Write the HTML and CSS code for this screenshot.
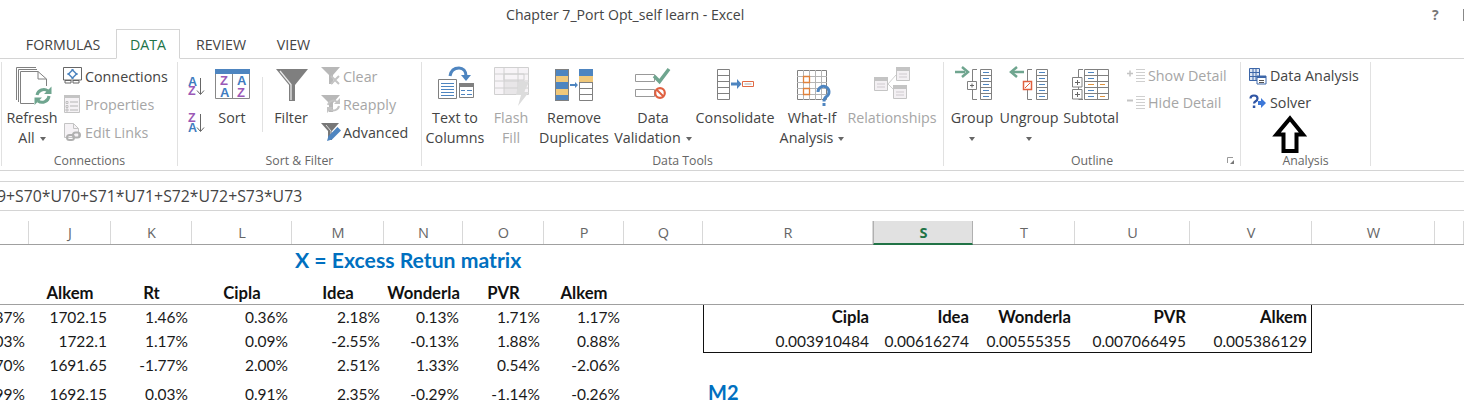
FILE: index.html
```html
<!DOCTYPE html>
<html lang="en">
<head>
<meta charset="utf-8">
<title>Chapter 7_Port Opt_self learn - Excel</title>
<link rel="stylesheet" href="styles.css">
</head>
<body>
<div class="page">
  <header class="titlebar">
    <span class="title">Chapter 7_Port Opt_self learn - Excel</span>
    <span class="help">?</span>
    <span class="winline"></span>
  </header>
  <nav class="tabs">
    <span class="tab">FORMULAS</span>
    <span class="tab active">DATA</span>
    <span class="tab">REVIEW</span>
    <span class="tab">VIEW</span>
  </nav>
  <section class="ribbon">
    <div class="group g1">
      <div class="body">
        <div class="big w-refresh">
          <svg class="bigicon" width="56" height="46" viewBox="4 62 56 46"><g fill="none" stroke="#808080"><path d="M16.5 100V67.5H36"/><path d="M18.5 102V69.5H37"/><path d="M20.5 103.5V71.5H38L46.5 79V86"/><path d="M20.5 103.5H34M38 71.5V79H46.5"/></g><g fill="none" stroke="#6fa58f" stroke-width="3"><path d="M37 95a7 7 0 0 1 11-4"/><path d="M49 96a7 7 0 0 1-11 5"/></g><path d="M51.500 86.500v7.500h-7.500zM34.500 105v-7.500h7.500z" fill="#6fa58f"/></svg>
          <span class="lbl">Refresh</span>
          <span class="lbl">All<i class="caret"></i></span>
        </div>
        <div class="small-col ml2">
          <div class="small"><svg width="21" height="20" viewBox="62 66 21 20"><path d="M63.500 67.500h18v12.500h-18z" fill="#fff" stroke="#666"/><path d="M65 80.500h6v2.500h-6zM73 80.500h6v2.500h-6z" fill="#fff" stroke="#666"/><path d="M72.500 70l4 4-4 4-4-4z" fill="#fff" stroke="#4e85c0" stroke-width="1.500"/><path d="M71.500 69h2v2h-2zM71.500 77h2v2h-2zM67.500 73h2v2h-2zM75.500 73h2v2h-2z" fill="#4e85c0"/></svg><span>Connections</span></div>
          <div class="small off"><svg width="21" height="20" viewBox="62 94 21 20"><path d="M64.500 95.500h15v17h-15z" fill="#f5f2f5" stroke="#c4c4c4"/><path d="M64 95h16v3H64z" fill="#c4c4c4"/><path d="M70 102h8M70 106h8M70 110h8" stroke="#b5b5b5"/><path d="M66 101.500h2v2h-2zM66 105.500h2v2h-2zM66 109h2v2h-2z" fill="none" stroke="#b5b5b5" stroke-width=".8"/></svg><span>Properties</span></div>
          <div class="small off"><svg width="21" height="20" viewBox="62 122 21 20"><path d="M64.500 123.500h9l5 5v9h-14z" fill="#f5f2f5" stroke="#c4c4c4"/><path d="M73.500 123.500v5h5" fill="none" stroke="#c4c4c4"/><g fill="none" stroke="#b0b0b0" stroke-width="2"><rect x="67" y="135" width="7" height="5" rx="2.500"/><rect x="73" y="132.500" width="7" height="5" rx="2.500"/></g></svg><span>Edit Links</span></div>
        </div>
      </div>
      <div class="group-label">Connections</div>
    </div>

    <div class="group g2">
      <div class="body">
        <div class="sortcol">
          <svg width="20" height="36" viewBox="187 68 20 36"><text class="ico-l blue" x="188" y="86">A</text><text class="ico-l purple" x="188" y="95">Z</text><path d="M200.500 78v16M197 90.500l3.500 4 3.500-4" fill="none" stroke="#666"/></svg>
          <svg width="20" height="36" viewBox="187 104 20 36"><text class="ico-l purple" x="188" y="122">Z</text><text class="ico-l blue" x="188" y="132">A</text><path d="M200.500 114v17M197 127.500l3.500 4 3.500-4" fill="none" stroke="#666"/></svg>
        </div>
        <div class="big w-sort">
          <svg class="bigicon" width="50" height="46" viewBox="207 62 50 46"><path d="M215.500 69.500h34v29h-34z" fill="#fff" stroke="#888"/><path d="M215 69h35v5h-35z" fill="#4e85c0"/><path d="M232.500 74v25" stroke="#888"/><text class="ico-m purple" x="220" y="85">Z</text><text class="ico-m blue" x="220" y="97">A</text><text class="ico-m blue" x="237" y="85">A</text><text class="ico-m purple" x="237" y="97">Z</text></svg>
          <span class="lbl">Sort</span>
        </div>
        <div class="vsep"></div>
        <div class="big w-filter">
          <svg class="bigicon" width="56" height="46" viewBox="263 62 56 46"><path d="M276 69h32l-13 16v16h-6V85z" fill="#7f7f7f"/><path d="M280 71l11 13.500V100" fill="none" stroke="#e8e8e8" stroke-width="1.300"/></svg>
          <span class="lbl">Filter</span>
        </div>
        <div class="small-col ml2">
          <div class="small off"><svg width="20" height="20" viewBox="321 66 20 20"><path d="M321 67h19l-7 8v9h-4v-9z" fill="#b8b8b8"/><path d="M331 76l8 8M339 76l-8 8" stroke="#c4c4c4" stroke-width="2"/></svg><span>Clear</span></div>
          <div class="small off"><svg width="20" height="20" viewBox="321 94 20 20"><path d="M321 95h19l-7 8v9h-4v-9z" fill="#b8b8b8"/><g fill="none" stroke="#c4c4c4" stroke-width="2"><path d="M328 105a5.500 5.500 0 0 1 9-3"/><path d="M339 106a5.500 5.500 0 0 1-9 3"/></g><path d="M340 98v6h-6zM327 113v-6h6z" fill="#c4c4c4"/></svg><span>Reapply</span></div>
          <div class="small"><svg width="20" height="20" viewBox="321 122 20 20"><path d="M321 123h18l-7 8v9h-4v-9z" fill="#777"/><path d="M326 125l5 6v8" fill="none" stroke="#ddd"/><path d="M327 141l1.500-5 9-9 3.500 3.500-9 9z" fill="#4e85c0"/></svg><span>Advanced</span></div>
        </div>
      </div>
      <div class="group-label">Sort &amp; Filter</div>
    </div>

    <div class="group g3">
      <div class="body">
        <div class="big w-text">
          <svg class="bigicon" width="58" height="46" viewBox="426 62 58 46"><path d="M438.500 79.500h18v19h-18z" fill="#fff" stroke="#808080"/><path d="M441 83.500h13M441 86.500h13M441 89.500h13M441 92.500h13M441 95.500h13" stroke="#4e85c0"/><path d="M459.500 83.500h14v14h-14z" fill="#fff" stroke="#808080"/><path d="M459 83h15v4h-15z" fill="#808080"/><path d="M461 90.500h4M467 90.500h5M461 94.500h4M467 94.500h5" stroke="#4e85c0"/><path d="M450 76c1-6 5-8 9-8s7 3 7 8" fill="none" stroke="#4e85c0" stroke-width="3"/><path d="M461 75h10l-5 6z" fill="#4e85c0"/></svg>
          <span class="lbl">Text to</span><span class="lbl">Columns</span>
        </div>
        <div class="big w-flash off">
          <svg class="bigicon" width="54" height="46" viewBox="484 62 54 46"><path d="M494.500 67.500h34v27h-34z" fill="#f7f4f7" stroke="#d0d0d0"/><path d="M504 74h20v6h-20z" fill="none" stroke="#d0d0d0"/><path d="M504 81h21v13h-21z" fill="#e8e6e8"/><path d="M494 74h35M494 81h35M494 88h35M504 67v28M518 67v28" fill="none" stroke="#d0d0d0"/><path d="M519 82h10l-5 10h5l-11 14 3-11h-5z" fill="#dcdcdc"/></svg>
          <span class="lbl">Flash</span><span class="lbl">Fill</span>
        </div>
        <div class="big w-remove">
          <svg class="bigicon" width="72" height="46" viewBox="538 62 72 46"><path d="M555 69h14v32h-14z" fill="#4e85c0"/><path d="M555 76h14v6h-14zM555 89h14v6h-14z" fill="#f0c87a"/><path d="M555.500 69.500h13v31h-13z" fill="none" stroke="#808080"/><path d="M579.500 69.500h13v31h-13z" fill="#fff" stroke="#808080"/><path d="M579 69h14v7h-14z" fill="#4e85c0"/><path d="M579 76h14v6h-14z" fill="#f0c87a"/><path d="M579 82.500h14M579 88.500h14M579 94.500h14" stroke="#808080"/><path d="M570 84h5v-2l3 3-3 3v-2h-5z" fill="#4e85c0"/></svg>
          <span class="lbl">Remove</span><span class="lbl">Duplicates</span>
        </div>
        <div class="big w-valid">
          <svg class="bigicon" width="86" height="46" viewBox="610 62 86 46"><path d="M635.500 74.500h19v7h-19zM635.500 89.500h19v7h-19z" fill="#fff" stroke="#999"/><path d="M654 76l5.500 5.500L669 69" fill="none" stroke="#6fa58f" stroke-width="3.500"/><circle cx="660" cy="93" r="4.800" fill="#fff" stroke="#e06040" stroke-width="2.200"/><path d="M656.500 89.500l7 7" stroke="#e06040" stroke-width="2"/></svg>
          <span class="lbl">Data</span>
          <span class="lbl">Validation<i class="caret"></i></span>
        </div>
        <div class="big w-cons">
          <svg class="bigicon" width="78" height="46" viewBox="696 62 78 46"><path d="M717.500 69.500h12v30h-12z" fill="#fff" stroke="#808080"/><path d="M717 75.500h13M717 81.500h13M717 87.500h13M717 93.500h13" stroke="#808080"/><path d="M731 82.500h6V79l4.500 5-4.500 5v-3.500h-6z" fill="#4e85c0"/><path d="M742.500 81.500h11v5h-11z" fill="#fff" stroke="#e06a45"/><path d="M744.500 84h7" stroke="#aaa"/></svg>
          <span class="lbl">Consolidate</span>
        </div>
        <div class="big w-what">
          <svg class="bigicon" width="76" height="46" viewBox="774 62 76 46"><path d="M797.500 70.500h29v29h-29z" fill="#fff" stroke="#808080"/><path d="M797 76.500h30M797 82.500h30M797 88.500h30M797 94.500h30M803.500 70v30M809.500 70v30M815.500 70v30M821.500 70v30" stroke="#b5b5b5"/><path d="M803.500 76.500h6v6h-6zM803.500 88.500h6v6h-6z" fill="#fff" stroke="#e0813a" stroke-width="1.300"/><path d="M818 92a5.500 5.500 0 1 1 8.500 4.500c-2 1.500-2.500 2-2.500 5" fill="none" stroke="#4e85c0" stroke-width="3"/><path d="M822.500 103h3v3h-3z" fill="#4e85c0"/></svg>
          <span class="lbl">What-If</span>
          <span class="lbl">Analysis<i class="caret"></i></span>
        </div>
        <div class="big w-rel off">
          <svg class="bigicon" width="84" height="46" viewBox="850 62 84 46"><path d="M888 84l8-9M888 84l7 7" stroke="#d0d0d0"/><g fill="#f3f0f3" stroke="#c4c4c4"><path d="M874.500 77.500h13v13h-13zM896.500 67.500h13v13h-13zM893.500 85.500h13v13h-13z"/></g><path d="M874 77h14v4h-14zM896 67h14v4h-14zM893 85h14v4h-14z" fill="#c4c4c4"/><path d="M877 84h8M877 87h8M899 74h8M899 77h8M896 92h8M896 95h8" stroke="#cfcacf"/></svg>
          <span class="lbl">Relationships</span>
        </div>
      </div>
      <div class="group-label">Data Tools</div>
    </div>

    <div class="group g4">
      <div class="body">
        <div class="big w-group">
          <svg class="bigicon" width="50" height="46" viewBox="947 62 50 46"><path d="M955 72h10" stroke="#6fa58f" stroke-width="2.500"/><path d="M962 67l6 5-6 5" fill="none" stroke="#6fa58f" stroke-width="2.500"/><path d="M977 69.500h-4.500v11.500M972.500 89v10.500h4.500" fill="none" stroke="#808080"/><path d="M967.500 81.500h9v8h-9z" fill="#fff" stroke="#808080"/><path d="M970 85.500h4M972 83.500v4" stroke="#666"/><path d="M980.500 69.500h11v30h-11z" fill="#fff" stroke="#808080"/><path d="M980 75.500h12M980 81.500h12M980 87.500h12M980 93.500h12" stroke="#808080"/><path d="M983 72.500h6M983 78.500h6M983 84.500h6M983 90.500h6M983 96.500h6" stroke="#4e85c0"/></svg>
          <span class="lbl">Group</span>
          <span class="lbl"><i class="caret solo"></i></span>
        </div>
        <div class="big w-ungroup">
          <svg class="bigicon" width="64" height="46" viewBox="997 62 64 46"><path d="M1013 72h11" stroke="#6fa58f" stroke-width="2.500"/><path d="M1017 67l-6 5 6 5" fill="none" stroke="#6fa58f" stroke-width="2.500"/><path d="M1032 69.500h-4.500v11.500M1027.500 89v10.500h4.500" fill="none" stroke="#808080"/><path d="M1023.500 81.500h8v8h-8z" fill="#fff" stroke="#e06040" stroke-width="1.500"/><path d="M1025 88l5-5" stroke="#e06040"/><path d="M1036.500 69.500h11v30h-11z" fill="#fff" stroke="#808080"/><path d="M1036 75.500h12M1036 81.500h12M1036 87.500h12M1036 93.500h12" stroke="#808080"/><path d="M1039 72.500h6M1039 78.500h6M1039 84.500h6M1039 90.500h6M1039 96.500h6" stroke="#4e85c0"/></svg>
          <span class="lbl">Ungroup</span>
          <span class="lbl"><i class="caret solo"></i></span>
        </div>
        <div class="big w-subtotal">
          <svg class="bigicon" width="60" height="46" viewBox="1061 62 60 46"><path d="M1083 69.500h-4.500V77M1078.500 87v2M1078.500 99.500h4.500" fill="none" stroke="#808080"/><path d="M1072.500 77.500h9.500v9.500h-9.500zM1072.500 89.500h9.500v9.500h-9.500z" fill="#fff" stroke="#808080"/><path d="M1075 82.500h5M1077.500 80v5M1075 94.500h5M1077.500 92v5" stroke="#666"/><path d="M1084.500 69.500h24v30h-24z" fill="#fff" stroke="#808080"/><path d="M1084 75.500h25M1084 81.500h25M1084 87.500h25M1084 93.500h25M1097.500 69v31" stroke="#808080"/><path d="M1088 72.500h6M1088 78.500h6M1088 84.500h6M1088 90.500h6M1088 96.500h6" stroke="#4e85c0"/><path d="M1100 84.500h5M1100 96.500h5M1088 84.500h6" stroke="#e0913a"/></svg>
          <span class="lbl">Subtotal</span>
        </div>
        <div class="small-col tight ml5">
          <div class="small off"><svg width="20" height="20" viewBox="1126 65 20 20"><path d="M1127 72.500h6M1130 69.500v6" stroke="#c4c4c4" stroke-width="1.500"/><path d="M1136 68.500h9M1136 71.500h9M1136 74.500h9M1136 77.500h9M1136 80.500h9" stroke="#cfcfcf"/></svg><span>Show Detail</span></div>
          <div class="small off"><svg width="20" height="20" viewBox="1126 92 20 20"><path d="M1127 99.500h6" stroke="#c4c4c4" stroke-width="2"/><path d="M1136 95.500h9M1136 98.500h9M1136 101.500h9M1136 104.500h9M1136 107.500h9" stroke="#cfcfcf"/></svg><span>Hide Detail</span></div>
        </div>
      </div>
      <div class="group-label labelled">Outline
        <svg class="launcher" width="8" height="8" viewBox="0 0 8 8"><path d="M.5 6V.5H6" fill="none" stroke="#999"/><path d="M7 3v4H3z" fill="#777"/></svg>
      </div>
    </div>

    <div class="group g5">
      <div class="body">
        <div class="small-col tight">
          <div class="small"><svg width="19" height="20" viewBox="1249 65 19 20"><path d="M1249.500 67.500h10v12h-10z" fill="#dfe7f3" stroke="#3c66a8"/><path d="M1253 67v13M1256 67v13M1249 71.500h11M1249 75.500h11" stroke="#3c66a8"/><path d="M1257 75h9v8h-9z" fill="#fff" stroke="#3c66a8"/><path d="M1257 75h9v2h-9z" fill="#3c66a8"/><path d="M1259 79.500h5M1259 81.500h5" stroke="#555"/></svg><span>Data Analysis</span></div>
          <div class="small"><svg width="19" height="20" viewBox="1249 92 19 20"><path d="M1250.500 97.500c0-4 7-4 7 0 0 3-3.500 2.500-3.500 5" fill="none" stroke="#2f55a4" stroke-width="2.200"/><path d="M1252.800 104.500h2.500v2.500h-2.500z" fill="#2f55a4"/><path d="M1258 100h3v-3l5 5-5 5v-3h-3z" fill="#3d78d8"/></svg><span>Solver</span></div>
        </div>
      </div>
      <div class="group-label">Analysis</div>
    </div>

    <svg class="annot" width="36" height="40" viewBox="1272 115 36 40"><path d="M1290 118.500l13 16h-6.500v16.500h-13v-16.500h-7z" fill="#fff" stroke="#000" stroke-width="4"/></svg>
  </section>

  <div class="formula"><span>9+S70*U70+S71*U71+S72*U72+S73*U73</span></div>

  <div class="colhead cols">
    <span></span><span>J</span><span>K</span><span>L</span><span>M</span><span>N</span><span>O</span><span>P</span><span>Q</span><span>R</span><span class="sel">S</span><span>T</span><span>U</span><span>V</span><span>W</span><span></span>
  </div>

  <div class="sheet">
    <div class="cols r-title"><span></span><span></span><span></span><span></span><span class="heading">X = Excess Retun matrix</span></div>
    <div class="cols r-head">
      <span></span><span class="c b">Alkem</span><span class="c b">Rt</span><span class="c b">Cipla</span><span class="c b">Idea</span><span class="c b">Wonderla</span><span class="c b">PVR</span><span class="c b">Alkem</span>
    </div>
    <div class="cols r1">
      <span class="n">.87%</span><span class="n">1702.15</span><span class="n">1.46%</span><span class="n">0.36%</span><span class="n">2.18%</span><span class="n">0.13%</span><span class="n">1.71%</span><span class="n">1.17%</span><span></span>
      <span class="n b boxl">Cipla</span><span class="n b">Idea</span><span class="n b">Wonderla</span><span class="n b">PVR</span><span class="n b boxr">Alkem</span>
    </div>
    <div class="cols r2">
      <span class="n">.03%</span><span class="n">1722.1</span><span class="n">1.17%</span><span class="n">0.09%</span><span class="n">-2.55%</span><span class="n">-0.13%</span><span class="n">1.88%</span><span class="n">0.88%</span><span></span>
      <span class="n boxl boxb">0.003910484</span><span class="n boxb">0.00616274</span><span class="n boxb">0.00555355</span><span class="n boxb">0.007066495</span><span class="n boxr boxb">0.005386129</span>
    </div>
    <div class="cols r3">
      <span class="n">.70%</span><span class="n">1691.65</span><span class="n">-1.77%</span><span class="n">2.00%</span><span class="n">2.51%</span><span class="n">1.33%</span><span class="n">0.54%</span><span class="n">-2.06%</span>
    </div>
    <div class="cols r4">
      <span class="n">.99%</span><span class="n">1692.15</span><span class="n">0.03%</span><span class="n">0.91%</span><span class="n">2.35%</span><span class="n">-0.29%</span><span class="n">-1.14%</span><span class="n">-0.26%</span><span></span>
      <span class="heading m2">M2</span>
    </div>
  </div>
</div>
</body>
</html>
```
FILE: styles.css
```css
* { box-sizing: border-box; }
html, body { margin: 0; padding: 0; background: #fff; }
.page { width: 1464px; height: 408px; overflow: hidden; font-family: "Open Sans", "Noto Sans", sans-serif; color: #444; }

.titlebar { height: 29px; display: flex; align-items: center; font-size: 14.100px; padding-left: 506px; }
.title { width: 926px; white-space: nowrap; color: #444; }
.help { font-weight: 700; font-size: 14px; color: #777; width: 31px; }
.winline { width: 1px; height: 12px; background: #888; }

.tabs { height: 30px; display: flex; padding-left: 10px; border-bottom: 1px solid #d4d4d4; font-size: 14.200px; }
.tab { height: 30px; display: flex; align-items: center; justify-content: center; width: 106px; color: #444; }
.tab:nth-child(3) { width: 82px; }
.tab:nth-child(4) { width: 63px; }
.tab.active { width: 64px; color: #217346; background: #fff; border: 1px solid #d4d4d4; border-bottom: 1px solid #fff; }

.ribbon { position: relative; display: flex; height: 112px; padding-top: 3px; border-bottom: 1px solid #d4d4d4; font-size: 14.300px; }
.annot { position: absolute; left: 1272px; top: 56px; }

.group { height: 104px; border-right: 1px solid #e1e1e1; }
.g1 { width: 177px; margin-left: 1px; border-left: 1px solid #e1e1e1; }
.g2 { width: 244px; }
.g3 { width: 522px; }
.g4 { width: 297px; }
.g5 { width: 130px; }
.body { display: flex; height: 90px; }
.g1 .body { padding-left: 2px; }
.g2 .body { padding-left: 9px; }
.g3 .body { padding-left: 4px; }
.g4 .body { padding-left: 3px; }
.g5 .body { padding-left: 8px; }

.group-label { position: relative; height: 16px; padding-top: 1px; line-height: 16px; text-align: center; font-size: 12.300px; color: #666; }
.launcher { position: absolute; left: 283px; top: 5px; }

.big { display: flex; flex-direction: column; align-items: center; flex: none; }
.bigicon { display: block; flex: none; }
.lbl { height: 20px; line-height: 20px; white-space: nowrap; }
.off { color: #a6a6a6; }
.caret { display: inline-block; width: 0; height: 0; margin-left: 5px; vertical-align: 2px; border: 3.500px solid transparent; border-top: 4px solid #666; border-bottom: 0; }
.caret.solo { margin-left: 0; }

.w-refresh { width: 56px; }
.w-sort { width: 50px; }
.w-filter { width: 56px; }
.w-text { width: 58px; }
.w-flash { width: 54px; }
.w-remove { width: 72px; }
.w-valid { width: 86px; }
.w-cons { width: 78px; }
.w-what { width: 76px; }
.w-rel { width: 84px; }
.w-group { width: 50px; }
.w-ungroup { width: 64px; }
.w-subtotal { width: 60px; }

.small-col { display: flex; flex-direction: column; }
.ml2 { margin-left: 2px; }
.ml5 { margin-left: 5px; }
.small { display: flex; align-items: center; gap: 2px; height: 28px; white-space: nowrap; }
.small svg { flex: none; }
.tight .small { height: 27px; }

.sortcol { display: flex; flex-direction: column; padding-top: 6px; width: 20px; }
.sortcol svg { display: block; }
.vsep { width: 1px; height: 55px; margin: 15px 0 0 5px; background: #e1e1e1; flex: none; }

.ico-l { font: 700 12.500px "Liberation Sans", sans-serif; }
.ico-m { font: 700 13px "Liberation Sans", sans-serif; }
.blue { fill: #3f7cbf; }
.purple { fill: #9b59b6; }

.formula { height: 30px; margin-top: 10px; border-top: 1px solid #d4d4d4; border-bottom: 1px solid #d4d4d4; line-height: 28px; font-size: 15.800px; white-space: nowrap; overflow: hidden; color: #444; }
.formula span { display: block; margin-left: -3px; }

.cols { display: grid; grid-template-columns: 29px 82px 81px 100px 92px 79px 81px 80px 79px 170px 100px 102px 115px 122px 123px 29px; }

.colhead { height: 24px; margin-top: 10px; border-bottom: 1px solid #a0a0a0; font-size: 14.500px; color: #666; }
.colhead span { display: flex; align-items: center; justify-content: center; height: 23px; padding-left: 1px; border-right: 1px solid #d8d8d8; }
.colhead .sel { height: 24px; background: #e1e1e1; color: #217346; font-weight: 700; border-bottom: 2px solid #217346; border-right: 1px solid #b0b0b0; border-left: 1px solid #b0b0b0; }

.sheet { font-family: Lato, "Open Sans", sans-serif; font-size: 15.500px; color: #1a1a1a; }
.sheet span { white-space: nowrap; }
.r-title { height: 33px; align-items: center; }
.r-head { height: 27px; padding-top: 3px; border-bottom: 1px solid #a0a0a0; align-items: center; }
.r1 { height: 24px; }
.r2 { height: 24px; }
.r3 { height: 24px; }
.r4 { height: 34px; }
.r1 span, .r2 span, .r3 span, .r4 span { display: flex; align-items: center; }
.n { justify-content: flex-end; padding-right: 4px; }
.c { text-align: center; }
.b { font-weight: 700; font-size: 16.700px; color: #111; }
.boxl { border-left: 1px solid #111; }
.boxr { border-right: 1px solid #111; }
.boxb { border-bottom: 1px solid #111; }
.heading { font-weight: 700; font-size: 21.200px; color: #0070c0; padding: 0 0 3px 3px; }
.m2 { font-size: 20px; padding: 0 0 4px 5px; }
```
